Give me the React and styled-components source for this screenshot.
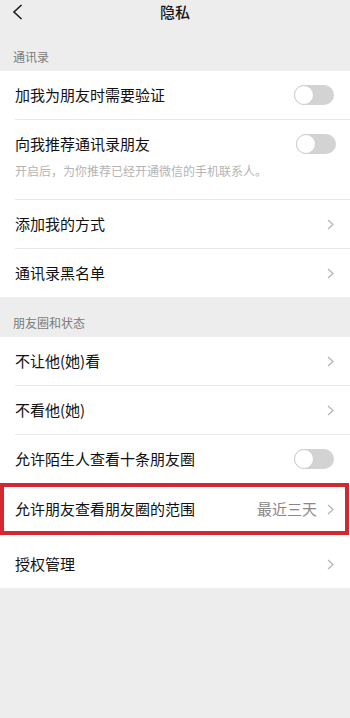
import React from "react";
import styled, { createGlobalStyle } from "styled-components";

const Global = createGlobalStyle`
  html, body { margin: 0; padding: 0; background: #ededed; }
  body { font-family: "Noto Sans CJK SC", "Noto Sans", sans-serif; -webkit-font-smoothing: antialiased; }
  * { box-sizing: border-box; }
`;

const Page = styled.div`
  width: 350px;
  min-height: 718px;
  background: #ededed;
  display: flex;
  flex-direction: column;
`;

const Header = styled.div`
  height: 25px;
  display: flex;
  align-items: center;
  justify-content: center;
  position: relative;
`;

const BackBtn = styled.div`
  position: absolute;
  left: 12px;
  top: 4px;
  width: 12px;
  height: 16px;
  display: flex;
`;

const Title = styled.div`
  font-size: 15px;
  line-height: 20px;
  font-weight: 500;
  color: #181818;
  margin-top: -1px;
`;

const SectionLabel = styled.div`
  height: ${(p) => (p.$tall ? 46 : 40)}px;
  display: flex;
  align-items: flex-end;
  padding: 0 0 6px 13px;
  font-size: 12px;
  line-height: 16px;
  color: #7a7a7a;
`;

const Group = styled.div`
  background: #fff;
  display: flex;
  flex-direction: column;
`;

const Row = styled.div`
  padding-left: 15px;
  background: #fff;
  padding-top: ${(p) => p.$extraTop || 0}px;
  ${(p) => p.$highlight && `
    border: 4px solid #d32832;
    padding-left: 11px;
    margin-right: 1px;
  `}
`;

const RowBody = styled.div`
  min-height: ${(p) => (p.$highlight ? 44 : p.$divider ? 49 : 48)}px;
  display: flex;
  align-items: ${(p) => (p.$top ? "flex-start" : "center")};
  padding: ${(p) => (p.$top ? "14px 14px 20px 0" : p.$highlight ? "0 11px 0 0" : "0 16px 0 0")};
  border-bottom: ${(p) => (p.$divider ? "1px solid #e8e8e8" : "none")};
  gap: 8px;
`;

const TextCol = styled.div`
  flex: 1;
  display: flex;
  flex-direction: column;
  gap: 8px;
`;

const RowTitle = styled.div`
  font-size: 15px;
  line-height: 20px;
  color: #111;
`;

const SubText = styled.div`
  font-size: 12px;
  line-height: 17px;
  color: #b4b4b4;
`;

const Value = styled.div`
  font-size: 15px;
  line-height: 20px;
  color: #888;
  margin-right: 2px;
`;

const Track = styled.div`
  width: 40px;
  height: 20px;
  border-radius: 10px;
  background: #d3d3d3;
  display: flex;
  align-items: center;
  flex-shrink: 0;
`;

const Knob = styled.div`
  width: 20px;
  height: 20px;
  border-radius: 50%;
  background: #fff;
  border: 1px solid #cfcfcf;
`;

const Bottom = styled.div`
  flex: 1;
  background: #ededed;
`;

const Chevron = () => (
  <svg width="7" height="11" viewBox="0 0 7 11" style={{ flexShrink: 0 }}>
    <polyline points="1,1 6,5.5 1,10" fill="none" stroke="#b3b3b3" strokeWidth="1.2" />
  </svg>
);

const Toggle = () => (
  <Track>
    <Knob />
  </Track>
);

const Item = ({ title, sub, toggle, value, divider, highlight, extraTop }) => (
  <Row $highlight={highlight} $extraTop={extraTop}>
    <RowBody $divider={divider} $top={!!sub} $highlight={highlight}>
      <TextCol>
        <RowTitle>{title}</RowTitle>
        {sub && <SubText>{sub}</SubText>}
      </TextCol>
      {value && <Value>{value}</Value>}
      {toggle ? <Toggle /> : <Chevron />}
    </RowBody>
  </Row>
);

export default function App() {
  return (
    <Page>
      <Global />
      <Header>
        <BackBtn>
          <svg width="12" height="16" viewBox="0 0 12 16">
            <polyline points="9.5,1 2,8 9.5,15" fill="none" stroke="#1e1e1e" strokeWidth="1.6" />
          </svg>
        </BackBtn>
        <Title>隐私</Title>
      </Header>
      <SectionLabel $tall>通讯录</SectionLabel>
      <Group>
        <Item title="加我为朋友时需要验证" toggle divider />
        <Item
          title="向我推荐通讯录朋友"
          sub="开启后，为你推荐已经开通微信的手机联系人。"
          toggle
          divider
        />
        <Item title="添加我的方式" divider />
        <Item title="通讯录黑名单" />
      </Group>
      <SectionLabel>朋友圈和状态</SectionLabel>
      <Group>
        <Item title="不让他(她)看" divider />
        <Item title="不看他(她)" divider />
        <Item title="允许陌生人查看十条朋友圈" toggle />
        <Item title="允许朋友查看朋友圈的范围" value="最近三天" highlight />
        <Item title="授权管理" extraTop={5} />
      </Group>
      <Bottom />
    </Page>
  );
}
